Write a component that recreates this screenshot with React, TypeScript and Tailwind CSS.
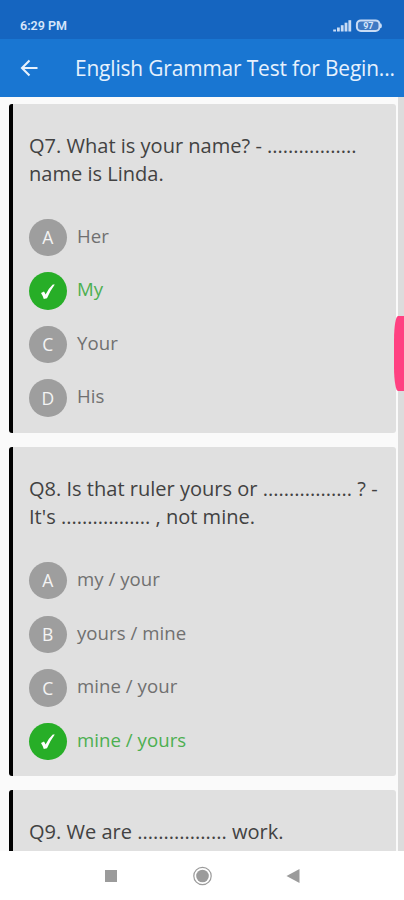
type Option = { label: string; text: string; correct?: boolean };
type Question = { lines: string[]; options: Option[] };

const questions: Question[] = [
  {
    lines: ['Q7. What is your name? - .................', 'name is Linda.'],
    options: [
      { label: 'A', text: 'Her' },
      { label: 'B', text: 'My', correct: true },
      { label: 'C', text: 'Your' },
      { label: 'D', text: 'His' },
    ],
  },
  {
    lines: ['Q8. Is that ruler yours or ................. ? -', "It's ................. , not mine."],
    options: [
      { label: 'A', text: 'my / your' },
      { label: 'B', text: 'yours / mine' },
      { label: 'C', text: 'mine / your' },
      { label: 'D', text: 'mine / yours', correct: true },
    ],
  },
  { lines: ['Q9. We are ................. work.'], options: [] },
];

function StatusBar() {
  return (
    <div className="flex h-[39px] shrink-0 items-center justify-between bg-[#1565c0] pr-[22px] pl-5 pt-3 text-[#d6e6fa]">
      <span className="font-[Roboto,sans-serif] text-[12.5px] leading-[14px] font-semibold">6:29 PM</span>
      <svg width="49" height="14" viewBox="0 0 49 14">
        <g fill="#c9dcf5">
          <rect x="0.2" y="10.5" width="2.8" height="2" />
          <rect x="4" y="8.5" width="2.8" height="4" />
          <rect x="7.8" y="6.2" width="2.8" height="6.3" />
          <rect x="11.6" y="3.7" width="2.8" height="8.8" />
          <rect x="15.4" y="1.2" width="2.8" height="11.3" />
          <path d="M47 4.5h1.2q1.4 2.3 0 4.6H47z" />
        </g>
        <rect x="23.9" y="1.4" width="22.6" height="10.6" rx="4" fill="#3e79c4" stroke="#c9dcf5" strokeWidth="2" />
        <text x="35.3" y="10" textAnchor="middle" fontFamily="Roboto, sans-serif" fontSize="9" fontWeight="700" fill="#d6e6fa">
          97
        </text>
      </svg>
    </div>
  );
}

function AppBar() {
  return (
    <header className="flex h-[58px] shrink-0 items-center bg-[#1976d2] text-[#e6f1fd]">
      <svg className="ml-5 shrink-0" width="19" height="18" viewBox="0 0 19 18" fill="none" stroke="currentColor" strokeWidth="2.1">
        <path d="M17.5 9H2.5M9.5 1.5L2 9l7.5 7.5" />
      </svg>
      <h1 className="ml-9 text-[20.9px] leading-7 tracking-[-0.15px] whitespace-nowrap">English Grammar Test for Begin...</h1>
    </header>
  );
}

function OptionRow({ label, text, correct }: Option) {
  return (
    <li className="flex h-[53.6px] items-start">
      <span
        className={`flex size-[37.5px] shrink-0 items-center justify-center rounded-full text-[17.5px] font-medium text-[#f4f4f4] ${
          correct ? 'bg-[#27ae27]' : 'bg-[#9e9e9e]'
        }`}
      >
        {correct ? (
          <svg width="16" height="17" viewBox="0 0 16 17" fill="white">
            <path d="M1 10L4 8.6Q5 10 5.6 11.4Q8.4 5.4 12.8 1.4L14.8 1.4Q9.8 8 7 15.2L3.8 16Q2.7 12.6 1 10Z" />
          </svg>
        ) : (
          <span className="pt-px leading-none">{label}</span>
        )}
      </span>
      <span
        className={`ml-[10.5px] pt-[3px] text-[18.6px] leading-7 tracking-[0.05px] whitespace-nowrap ${
          correct ? 'text-[#4caf50]' : 'text-[#707070]'
        }`}
      >
        {text}
      </span>
    </li>
  );
}

function QuestionCard({ lines, options }: Question) {
  return (
    <section className="h-[329px] shrink-0 rounded-[3px] border-l-4 border-black bg-[#e0e0e0] pt-7 pl-4">
      <h2 className="text-[20.05px] leading-7 whitespace-nowrap text-[#424242]">
        {lines.map((line) => (
          <span key={line} className="block">
            {line}
          </span>
        ))}
      </h2>
      <ul className="mt-[31.2px]">
        {options.map((option) => (
          <OptionRow key={option.label} {...option} />
        ))}
      </ul>
    </section>
  );
}

function NavigationBar() {
  return (
    <nav className="flex h-[49px] shrink-0 items-center justify-center bg-white">
      <svg width="196" height="20" viewBox="0 0 196 20" fill="#9b9b9b">
        <rect x="1" y="4" width="12" height="12" />
        <circle cx="98.5" cy="10" r="8.7" fill="none" stroke="#9b9b9b" strokeWidth="1.2" />
        <circle cx="98.5" cy="10" r="6.3" />
        <path d="M182.5 10l13-7v14z" />
      </svg>
    </nav>
  );
}

export default function App() {
  return (
    <div className="flex h-[900px] w-[404px] flex-col overflow-hidden bg-white font-['Open_Sans','Noto_Sans',sans-serif]">
      <StatusBar />
      <AppBar />
      <main className="flex h-[754px] shrink-0 overflow-hidden bg-[#fafafa]">
        <div className="flex w-[396px] shrink-0 flex-col gap-[14.3px] pt-[6.5px] pl-[9px]">
          {questions.map((question) => (
            <QuestionCard key={question.lines[0]} {...question} />
          ))}
        </div>
        <div className="relative ml-0.5 grow bg-[#dcdcdc]">
          <div className="absolute top-[218.5px] -left-1 h-[75px] w-3 rounded-l-[4px_24px] bg-[#ff4081]" />
        </div>
      </main>
      <NavigationBar />
    </div>
  );
}
